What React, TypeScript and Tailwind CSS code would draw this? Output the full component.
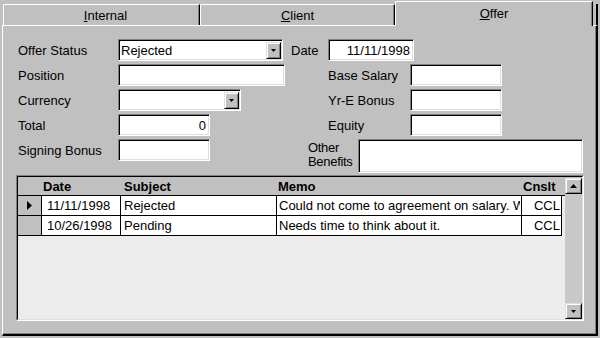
import React from "react";

const sunken =
  "border border-t-[#808080] border-l-[#808080] border-r-white border-b-white shadow-[inset_1px_1px_0_#000,inset_-1px_-1px_0_#dfdfdf] bg-white";
const raised =
  "border border-t-[#dfdfdf] border-l-[#dfdfdf] border-r-black border-b-black shadow-[inset_1px_1px_0_#fff,inset_-1px_-1px_0_#808080] bg-[#c0c0c0]";

function DownArrow() {
  return (
    <svg width="5" height="3" viewBox="0 0 5 3">
      <polygon points="0,0 5,0 2.5,3" fill="#000" />
    </svg>
  );
}

function UpArrow() {
  return (
    <svg width="7" height="4" viewBox="0 0 7 4">
      <polygon points="0,4 7,4 3.5,0" fill="#000" />
    </svg>
  );
}

function Label({ text, width }: { text: string; width: string }) {
  return <div className={`${width} h-[22px] flex items-center shrink-0 whitespace-nowrap`}>{text}</div>;
}

function Field({ width, value, right }: { width: string; value?: string; right?: boolean }) {
  return (
    <div
      className={`${sunken} ${width} h-[22px] shrink-0 flex items-center px-[3px] ${right ? "justify-end" : ""}`}
    >
      {value}
    </div>
  );
}

function Combo({ width, value }: { width: string; value?: string }) {
  return (
    <div className={`${sunken} ${width} h-[22px] shrink-0 flex items-center justify-between pl-[2px] pr-[1px]`}>
      <span>{value}</span>
      <div className={`${raised} w-[15px] h-[17px] flex items-center justify-center`}>
        <DownArrow />
      </div>
    </div>
  );
}

function Tab({ width, children }: { width: string; children: React.ReactNode }) {
  return (
    <div
      className={`${width} h-[21px] shrink-0 border-t border-l border-white border-r border-r-black shadow-[inset_-1px_0_0_#808080] rounded-tl-[2px] flex items-center justify-center`}
    >
      {children}
    </div>
  );
}

const rows = [
  { date: "11/11/1998", subject: "Rejected", memo: "Could not come to agreement on salary. Will follow up later.", cnslt: "CCL", current: true },
  { date: "10/26/1998", subject: "Pending", memo: "Needs time to think about it.", cnslt: "CCL", current: false },
];

export default function App() {
  return (
    <div className="w-[600px] h-[338px] bg-[#c0c0c0] text-black text-[13px] leading-[15px] font-['Liberation_Sans',Arial,sans-serif] overflow-hidden">
      {/* tab strip */}
      <div className="flex items-end h-[25px]">
        <div className="w-[3px] shrink-0" />
        <Tab width="w-[197px]">
          <span className="pl-[8px]">
            <span className="underline">I</span>nternal
          </span>
        </Tab>
        <Tab width="w-[195px]">
          <span>
            <span className="underline">C</span>lient
          </span>
        </Tab>
        <div className="relative z-10 -mb-[1px] w-[198px] h-[25px] shrink-0 bg-[#c0c0c0] border-t border-l border-white border-r border-r-black shadow-[inset_-1px_0_0_#808080] rounded-tl-[2px] flex items-center justify-center pb-[1px]">
          <span>
            <span className="underline">O</span>ffer
          </span>
        </div>
        <div className="w-[5px] h-[21px] shrink-0 border-r-2 border-black" />
      </div>

      {/* page */}
      <div className="ml-[2px] w-[596px] h-[311px] border-t border-l border-white border-r-2 border-b-2 border-r-black border-b-black shadow-[inset_-1px_-1px_0_#808080] pl-[13px] pt-[13px]">
        <div className="pl-[2px] flex flex-col gap-[3px]">
          <div className="flex">
            <Label text="Offer Status" width="w-[100px]" />
            <Combo width="w-[165px]" value="Rejected" />
            <Label text="Date" width="w-[37px] ml-[8px]" />
            <Field width="w-[86px]" value="11/11/1998" right />
          </div>
          <div className="flex">
            <Label text="Position" width="w-[100px]" />
            <Field width="w-[167px]" />
            <div className="w-[43px] shrink-0" />
            <Label text="Base Salary" width="w-[82px]" />
            <Field width="w-[92px]" />
          </div>
          <div className="flex">
            <Label text="Currency" width="w-[100px]" />
            <Combo width="w-[123px]" />
            <div className="w-[87px] shrink-0" />
            <Label text="Yr-E Bonus" width="w-[82px]" />
            <Field width="w-[92px]" />
          </div>
          <div className="flex">
            <Label text="Total" width="w-[100px]" />
            <Field width="w-[92px]" value="0" right />
            <div className="w-[118px] shrink-0" />
            <Label text="Equity" width="w-[82px]" />
            <Field width="w-[92px]" />
          </div>
          <div className="flex items-start h-[34px]">
            <Label text="Signing Bonus" width="w-[100px]" />
            <Field width="w-[92px]" />
            <div className="w-[98px] shrink-0" />
            <div className="w-[50px] shrink-0 pt-[2px] leading-[14px] tracking-[-0.3px]">
              Other
              <br />
              Benefits
            </div>
            <div className={`${sunken} w-[225px] h-[34px] shrink-0`} />
          </div>
        </div>

        {/* datasheet */}
        <div className="mt-[2px] w-[568px] h-[146px] border border-t-[#808080] border-l-[#808080] border-r-white border-b-white">
          <div className="w-full h-full border border-t-black border-l-black border-r-[#dfdfdf] border-b-[#dfdfdf] flex">
            <div className="w-[547px] h-full bg-[#ececec] flex flex-col">
              <div className="h-[19px] shrink-0 bg-[#c0c0c0] border-b border-black flex items-center font-bold">
                <div className="w-[24px] shrink-0" />
                <div className="w-[79px] shrink-0 pl-[1px]">Date</div>
                <div className="w-[156px] shrink-0 pl-[3px]">Subject</div>
                <div className="w-[245px] shrink-0 pl-[1px]">Memo</div>
                <div className="w-[40px] shrink-0 pl-[1px]">Cnslt</div>
              </div>
              {rows.map((r) => (
                <div key={r.date} className="flex h-[20px] shrink-0 w-[544px] border-b border-black">
                  <div className="w-[24px] shrink-0 bg-[#c0c0c0] border-r border-black flex items-center justify-center">
                    {r.current && (
                      <svg width="5" height="9" viewBox="0 0 5 9">
                        <polygon points="0,0 5,4.5 0,9" fill="#000" />
                      </svg>
                    )}
                  </div>
                  <div className="w-[79px] shrink-0 bg-white border-r border-black flex items-center pl-[5px]">{r.date}</div>
                  <div className="w-[156px] shrink-0 bg-white border-r border-black flex items-center pl-[3px]">{r.subject}</div>
                  <div className="w-[245px] shrink-0 bg-white border-r border-black pl-[2px] overflow-hidden">
                    <div className="w-[241px] h-full flex items-center overflow-hidden whitespace-nowrap">{r.memo}</div>
                  </div>
                  <div className="w-[40px] shrink-0 bg-white border-r border-black flex items-center justify-end pr-[1px]">{r.cnslt}</div>
                </div>
              ))}
            </div>
            <div className="w-[17px] h-full flex flex-col">
              <div className={`${raised} h-[16px] shrink-0 mt-[1px] flex items-center justify-center`}>
                <UpArrow />
              </div>
              <div className="flex-1 bg-[#c8c8c8]" />
              <div className={`${raised} h-[16px] shrink-0 flex items-center justify-center`}>
                <DownArrow />
              </div>
            </div>
          </div>
        </div>
      </div>
    </div>
  );
}
